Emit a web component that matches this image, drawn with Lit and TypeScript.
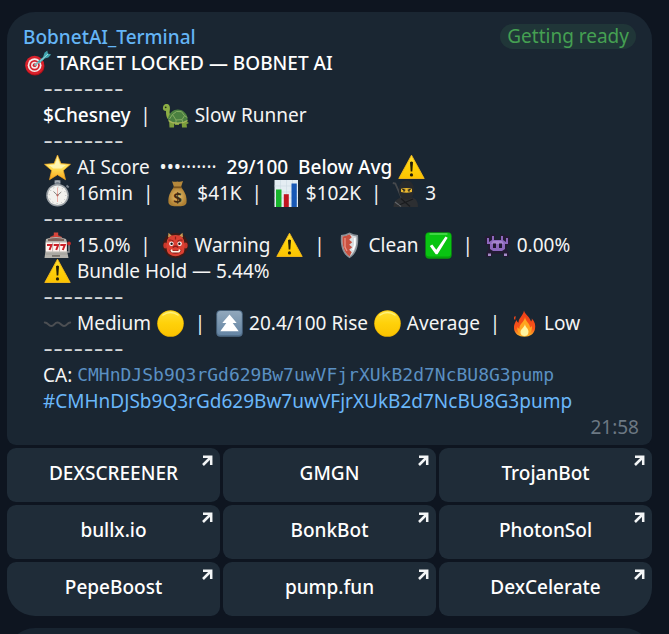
import { LitElement, html, svg, css, nothing } from "lit";
import { customElement, property } from "lit/decorators.js";

const glyphs: Record<string, unknown> = {
  target: svg`
    <circle cx="11" cy="16" r="9.6" fill="#a90f18"/><circle cx="10.6" cy="15.2" r="9.4" fill="#d8202b"/>
    <circle cx="10.6" cy="15.2" r="6.9" fill="#f4e9e9"/><circle cx="10.6" cy="15.2" r="5.2" fill="#d3222c"/>
    <circle cx="10.6" cy="15.2" r="3.5" fill="#f4e9e9"/><circle cx="10.6" cy="15.2" r="1.9" fill="#d3222c"/>
    <path d="M10.5 15.5L20 8" stroke="#7fb9bd" stroke-width="1.8"/>
    <path d="M13.500 11.500l5.500-4.300 1.500-4.400 2.800-2.200.6 2.800 3.200 1.200-2.800 2.900-3.700.9-4.500 4.600z" fill="#3fa3ad"/>
    <path d="M16 11.300L24 4" stroke="#a6dee0" stroke-width="1"/>`,
  turtle: svg`
    <path d="M1 7C.5 3 3.500 1 6.500 2.500c2 1.500 1.500 5 1 8 .5 3 2 5 3 6l-3 2C4 16 4 12 4 9 2.500 9 1.200 8.200 1 7z" fill="#8cae45"/>
    <circle cx="3.700" cy="5.300" r=".9" fill="#24301a"/>
    <path d="M7 18h5.500l-.5 7.500H7.500zM19.500 18h4.500l1.500 2 1.500 1-2.500 1.200.5 3.300H20zM13 19h4v4h-4z" fill="#7c9e3b"/>
    <path d="M6 16.500C7.500 9 14 6 19 8 24 10 26 14.500 25.500 18.500 20 22.300 11 22 6.500 18.500z" fill="#4b8040"/>
    <path d="M10.500 12.500l4-3 5 .2 3 4-2.500 4-6 .3zM7.500 17l3-4.500M14 18v3M20 17.700l1 3.300M22.500 13.700l2.800 1.800" fill="none" stroke="#86ad62" stroke-width="1"/>
    <path d="M6.500 18.500C11 22 20 22.300 25.500 18.500" fill="none" stroke="#a7b65c" stroke-width="1.500"/>`,
  star: svg`
    <path d="M13.500 1l3.500 8.600 9.500.7-7.200 6.100 2.200 9.300-8-5-8 5 2.200-9.300L.5 10.300l9.500-.7z" fill="url(#gold)" stroke="#f5a81c" stroke-width=".7" stroke-linejoin="round"/>
    <path d="M13.500 4.500l2.600 6.100 6 .5-4.800 3.500-7.800 0-4.700-3.500 6-.5z" fill="#fffbd0" opacity=".7"/>`,
  warning: svg`
    <path d="M13.500 1.200L26.200 24.500H.8z" fill="url(#sun)" stroke="#f6b91a" stroke-width=".9" stroke-linejoin="round"/>
    <path d="M12 8.200q1.500-1.200 3 0l-.7 9.300h-1.600z" fill="#231d08"/><circle cx="13.500" cy="20.900" r="1.600" fill="#231d08"/>`,
  stopwatch: svg`
    <path d="M11.500 1h4v4h-4zM22.500 5.500l2.200 2" stroke="#77808a" stroke-width="1.800" fill="#77808a"/>
    <path d="M10.800 2.500q2.700-2.500 5.400 0" fill="none" stroke="#a8afb5" stroke-width="1.300"/>
    <circle cx="13.500" cy="15.300" r="11.300" fill="#9ba1a6"/><circle cx="13.500" cy="15.300" r="9.800" fill="#f3f2ee"/>
    <circle cx="13.500" cy="15.300" r="8.300" fill="none" stroke="#9a9da0" stroke-width="1" stroke-dasharray=".7 3.650"/>
    <path d="M9.500 11.500l4 3.800 3.800-3.300" fill="none" stroke="#6b6765" stroke-width=".8"/>
    <path d="M13.500 7.500V22" stroke="#e8958b" stroke-width=".7"/><circle cx="13.500" cy="15.300" r="1.100" fill="#b5655b"/>`,
  money: svg`
    <path d="M8 1.200q2.500 1 5.500.2 2.500 1 5.500-.4l-2 6h-7z" fill="#b5883b"/>
    <path d="M10 7C6 12 3.800 17 4.500 22.500 5 26 9 26.300 13.500 26.300s8.500-.3 9-3.800C23.200 17 21 12 17 7z" fill="url(#sack)"/>
    <path d="M9.500 7.300h8" stroke="#7b541e" stroke-width="1.800"/>
    <text x="13.500" y="23" text-anchor="middle" class="cash">$</text>`,
  chart: svg`
    <path d="M1.500 0h23.500v27h-23.500z" fill="#e4edf3"/>
    <path d="M7.500 0v27M13.500 0v27M19.500 0v27M1.500 6h23.500M1.500 12h23.500M1.500 18h23.500M1.500 24h23.500" stroke="#cfdbe4" stroke-width=".7"/>
    <path d="M3 9.500h5.500V27H3z" fill="#18b52c"/><path d="M10.800 14.200h5V27h-5z" fill="#c01520"/><path d="M18.500 3.500h5.300V27h-5.300z" fill="#1858b5"/>`,
  ninja: svg`
    <path d="M.8 3l2.500.5 7 16" fill="none" stroke="#45484c" stroke-width="1.800"/>
    <path d="M1.500 27c0-5 3-8.500 8-9.500h10c4.500.5 6.500 4 6.500 9.500z" fill="#2d2f32"/>
    <path d="M7 10C7 3.500 10.500.5 14.500.5S22 3.500 22 10c0 7-3.500 9.500-7.500 9.500S7 17 7 10z" fill="#27292c"/>
    <path d="M9 8.800q5.500-1.500 11 0v3.200q-5.500 1.600-11 0z" fill="#e9b72f"/>
    <path d="M10.300 9.300l3 1M18.700 9.300l-3 1" stroke="#1a1a1a" stroke-width="1.100"/><circle cx="12" cy="10.900" r=".8" fill="#222"/><circle cx="17" cy="10.900" r=".8" fill="#222"/>
    <path d="M6 25.500L21 19M9 18.500l9 8" stroke="#1a1c1f" stroke-width="1.300"/>
    <path d="M3 22l6 4.500" stroke="#606368" stroke-width="1.200"/>`,
  slots: svg`
    <path d="M25 12v8h-3" fill="none" stroke="#8d8f91" stroke-width="1.500"/><circle cx="25" cy="11.500" r="1.900" fill="#c52c2b"/>
    <path d="M6 5Q12 1 18 5v2H6z" fill="#b7453d"/><path d="M9.800.5h4.400v4.500h-4.400z" fill="#d7443a"/>
    <path d="M2 7q10-4 20 0l1 3v9l1.500 7h-24L1.500 19v-9z" fill="#b4b2ac"/>
    <path d="M4 7q8-2 16 0v2H4z" fill="#7e625b"/><path d="M1.800 10.500h20.800v9H1.800z" fill="#fff3ef"/>
    <path d="M3 13h4.500l-2 5M9.700 13h4.500l-2 5M16.300 13h4.500l-2 5" fill="none" stroke="#cb2028" stroke-width="2"/>
    <path d="M8.600 10.500v9M15.500 10.500v9M1 22h22" stroke="#96928d" stroke-width=".6"/><path d="M8 23h8v1.800H8z" fill="#77736d"/>`,
  ogre: svg`
    <path d="M13.500 1Q5 1 2.500 7q-2 3-1.700 7 .2 4 2.700 6 2.500 6 10 6t10-6q2.500-2 2.700-6 .3-4-1.700-7-2.500-6-11-6z" fill="#3f1b16"/>
    <path d="M6 5.500L6.500.8 10 4zM21 5.500L20.500.8 17 4z" fill="#c99a55"/>
    <ellipse cx="3.300" cy="13.500" rx="1.900" ry="3" fill="#c8372b"/><ellipse cx="23.700" cy="13.500" rx="1.900" ry="3" fill="#c8372b"/>
    <path d="M4.300 12.500q0-9.500 9.200-9.500t9.200 9.500-2.700 9.500q-6.500 4.500-13 0-2.700-2-2.700-9.500z" fill="#dc4032"/>
    <path d="M6.500 8.300q3-1 5 1.200M20.500 8.300q-3-1-5 1.200M13.500 4.500v3" stroke="#8f211b" stroke-width="1.200" fill="none"/>
    <circle cx="9.400" cy="11.700" r="2.200" fill="#fff"/><circle cx="17.600" cy="11.700" r="2.200" fill="#fff"/><circle cx="9.600" cy="11.800" r="1.200" fill="#1f1412"/><circle cx="17.400" cy="11.800" r="1.200" fill="#1f1412"/>
    <path d="M10.700 15.500q2.800-2.500 5.600 0" fill="none" stroke="#8d1d1a" stroke-width="1.300"/>
    <path d="M7.500 17.800q6 1.500 12 0-.5 4-6 4t-6-4z" fill="#8b1f1b"/><path d="M8.300 18.500l1.700-1.500.7 2h5.600l.7-2 1.700 1.500-1.400 2h-7.600z" fill="#fff2e2"/>`,
  shield: svg`
    <path d="M13.500.5q4 2.400 8.500 2.500C23 14 20.500 22 13.500 26.300 6.500 22 4 14 5 3q4.500-.1 8.500-2.500z" fill="#8a9198"/>
    <path d="M13.500 2.200q3.500 2 7 2.300c.4 9-1.200 15.500-7 20C7.700 20 6.100 13.500 6.500 4.500q3.500-.3 7-2.300z" fill="#d9dde0"/>
    <path d="M13.500 2.200l2.200 3-2.500 2.500 3 2.500-3 2.500 3 2.500-3 2.500 2.500 2.500-2.200 4.300C7.700 20 6.100 13.500 6.500 4.500q3.500-.3 7-2.300z" fill="#c9503f"/>
    <path d="M9 6v9l2 4" stroke="#ec9285" stroke-width="1.300" fill="none"/><path d="M18.800 6v7l-2 5" stroke="#fff" stroke-width="1.600" fill="none"/>`,
  check: svg`
    <rect x=".3" y=".3" width="26.400" height="26.400" rx="4" fill="#079f0b"/><rect x="1" y="1" width="25" height="23.500" rx="3" fill="#09c412"/>
    <path d="M5 2h17" stroke="#78eb75" stroke-width="1" stroke-linecap="round"/>
    <path d="M4.800 14l2.500-1.500 4 5.200L20.500 4.500l2.200 1.300L12.500 22.300h-1.800z" fill="#fff"/>`,
  invader: svg`
    <path d="M1 4h4l2-1.500h4v5h5v-5h4L22 4h4v9h-3v5l2 3v4h-6v-3H8v3H2v-4l2-3v-5H1z" fill="#231b33"/>
    <path d="M8 4h2v4h7V4h2v4l3 2V6h2v6h-3v5l-3 2H9l-3-2v-5H3V6h2v4l3-2z" fill="#8d68bd"/>
    <path d="M9 9h9l2 3H7z" fill="#a584cd"/>
    <path d="M9 11.500h3V16H9zM15 11.500h3V16h-3z" fill="#211730"/>
    <path d="M4 21.500h3V24H4zM20 21.500h3V24h-3z" fill="#a58bc8"/>`,
  wavy: svg`<path d="M.8 12.500c3.500 0 3.500 3.500 6.500 3.500s3-3.500 6.200-3.500 3.500 3.500 6.500 3.500 3-3.300 6.200-3.500" fill="none" stroke="#4c4f53" stroke-width="2" stroke-linecap="round"/>`,
  circle: svg`<circle cx="13.500" cy="13.500" r="13.300" fill="#f0b800"/><circle cx="13.500" cy="13.300" r="12.600" fill="url(#sun)"/><path d="M6 5q7.500-5 15 0" stroke="#fff27c" stroke-width="1.500" fill="none" stroke-linecap="round"/>`,
  up: svg`
    <rect x=".3" y=".3" width="26.400" height="26.400" rx="4" fill="#526f8b"/><rect x="1.200" y="1" width="24.600" height="24" rx="3.500" fill="url(#steel)"/>
    <path d="M13.500 4.500l7.200 8.500h-4l6 8.200H4.300l6-8.200h-4z" fill="#fff"/>`,
  fire: svg`
    <path d="M13 .5c.8 4 6 6.500 7 11 .8-.6 1-1.800.8-3C24 12 24.700 15 24 19c-1 5-5 7.700-10.500 7.700S3.500 24 3 18.500C2.700 15 4 12.500 5.500 10c.5 1.500 1 2.300 2 2.700C7.500 8 12 6 13 .5z" fill="url(#flame)"/>
    <path d="M14 7c.5 4.500 5 6.500 5 10.500 1-.3 1.500-1 1.800-2 .8 6-2.300 10-7 10S6 22.300 6.300 17c.7 1 1.300 1.500 2.200 1.700C8 14 13.500 12 14 7z" fill="#ffa51f"/>
    <path d="M14 14c0 3 3.500 4.500 3.500 7.500s-1.500 4.500-4 4.500-4-1.500-4-4C9.500 19 13.500 17.500 14 14z" fill="#fff5a0"/>
    <path d="M4.500 6.500q-1.500 1-.5 3" stroke="#e6451c" stroke-width="1.300" fill="none"/>`,
};

@customElement("emoji-icon")
class EmojiIcon extends LitElement {
  @property() name = "";
  static styles = css`
    :host { display: inline-block; width: 29px; height: 26px; vertical-align: top; }
    .art { display: block; width: 27px; height: 27px; margin: 0 auto; overflow: visible; }
    .cash { font: 700 15px "Noto Sans", sans-serif; fill: #402b14; }
  `;
  render() {
    return html`<svg class="art" viewBox="0 0 27 27" aria-hidden="true">
      <defs>
        <linearGradient id="gold" x2="0" y2="1"><stop stop-color="#fff09a"/><stop offset=".5" stop-color="#ffe35a"/><stop offset="1" stop-color="#f7a51c"/></linearGradient>
        <linearGradient id="sun" x2="0" y2="1"><stop stop-color="#ffdf35"/><stop offset=".5" stop-color="#ffd10a"/><stop offset="1" stop-color="#fbc300"/></linearGradient>
        <linearGradient id="steel" x2="0" y2="1"><stop stop-color="#91a8bc"/><stop offset="1" stop-color="#6585a4"/></linearGradient>
        <radialGradient id="sack"><stop stop-color="#edc572"/><stop offset="1" stop-color="#ae7f32"/></radialGradient>
        <linearGradient id="flame" x2="0" y2="1"><stop stop-color="#ed3d17"/><stop offset=".7" stop-color="#f8551a"/><stop offset="1" stop-color="#ffc12a"/></linearGradient>
      </defs>
      ${glyphs[this.name] ?? nothing}
    </svg>`;
  }
}

const e = (name: string) => html`<emoji-icon name=${name}></emoji-icon>`;
const rule = html`<div class="line rule">--------</div>`;
const address = "CMHnDJSb9Q3rGd629Bw7uwVFjrXUkB2d7NcBU8G3pump";
const links = ["DEXSCREENER", "GMGN", "TrojanBot", "bullx.io", "BonkBot", "PhotonSol", "PepeBoost", "pump.fun", "DexCelerate"];

@customElement("app-root")
class AppRoot extends LitElement {
  static styles = css`
    :host {
      display: block; box-sizing: border-box; height: 100vh; overflow: hidden;
      padding: 12px 17px 0 7px; background: #0e1520; color: #f5f5f5;
      font: 400 19px/26px "Noto Sans", "Open Sans", sans-serif;
    }
    .message { background: #1a2632; border-radius: 28px 28px 9px 9px; padding: 12px 13px 5px 16px; }
    .head { display: flex; justify-content: space-between; align-items: flex-start; height: 26px; padding-right: 3px; }
    .sender { color: #64b5f6; font-weight: 500; }
    .status { line-height: 25px; padding: 0 7px; border-radius: 13px; background: #203638; color: #45a052; }
    .line { white-space: pre-wrap; min-height: 26px; overflow-wrap: anywhere; }
    .body { padding-left: 20px; }
    .rule { height: 26px; font: 22px/26px Inter, sans-serif; color: #d4d7d9; }
    .strong { font-weight: 500; color: #fff; }
    .code { font: 18px/26px "DejaVu Sans Mono", monospace; color: #5a90c2; border: 0; background: none; padding: 0; vertical-align: top; }
    .tag { color: #6ab7fa; text-decoration: none; }
    .time { display: block; text-align: right; color: #6c7883; }
    .keys { display: grid; grid-template-columns: repeat(3, 1fr); gap: 3px; margin-top: 3px; }
    .key {
      position: relative; padding: 12px 8px 16px; text-align: center; text-decoration: none;
      font-weight: 500; color: #fff; background: #1f2c38; border-radius: 9px;
    }
    .key:nth-child(7) { border-bottom-left-radius: 28px; }
    .key:nth-child(9) { border-bottom-right-radius: 28px; }
    .out { position: absolute; top: 7px; right: 7px; width: 11px; height: 11px; }
    .next { height: 80px; margin-top: 12px; background: #182430; border-radius: 28px; }
  `;
  render() {
    return html`
      <article class="message">
        <header class="head"><span class="sender">BobnetAI_Terminal</span><span class="status">Getting ready</span></header>
        <div class="line strong">${e("target")} TARGET LOCKED — BOBNET AI</div>
        <div class="body">
          ${rule}
          <div class="line"><span class="strong">$Chesney</span>  |  ${e("turtle")} Slow Runner</div>
          ${rule}
          <div class="line">${e("star")} AI Score  •••·······  <span class="strong">29/100  Below Avg </span>${e("warning")}</div>
          <div class="line">${e("stopwatch")} 16min  |  ${e("money")} $41K  |  ${e("chart")} $102K  |  ${e("ninja")} 3</div>
          ${rule}
          <div class="line">${e("slots")} 15.0%  |  ${e("ogre")} Warning ${e("warning")}  |  ${e("shield")} Clean ${e("check")}  |  ${e("invader")} 0.00%</div>
          <div class="line">${e("warning")} Bundle Hold — 5.44%</div>
          ${rule}
          <div class="line">${e("wavy")} Medium ${e("circle")}  |  ${e("up")} 20.4/100 Rise ${e("circle")} Average  |  ${e("fire")} Low</div>
          ${rule}
          <div class="line">CA: <button class="code">${address}</button></div>
          <div class="line"><a class="tag" href="#${address}">#${address}</a></div>
        </div>
        <time class="time">21:58</time>
      </article>
      <nav class="keys">
        ${links.map((label) => html`<a class="key" href="#">${label}<svg class="out" viewBox="0 0 11 11" aria-hidden="true"><path d="M1 1.800h8.200V10M9 2L1 10" fill="none" stroke="#f3f5f6" stroke-width="2.500"/></svg></a>`)}
      </nav>
      <div class="next"></div>
    `;
  }
}
